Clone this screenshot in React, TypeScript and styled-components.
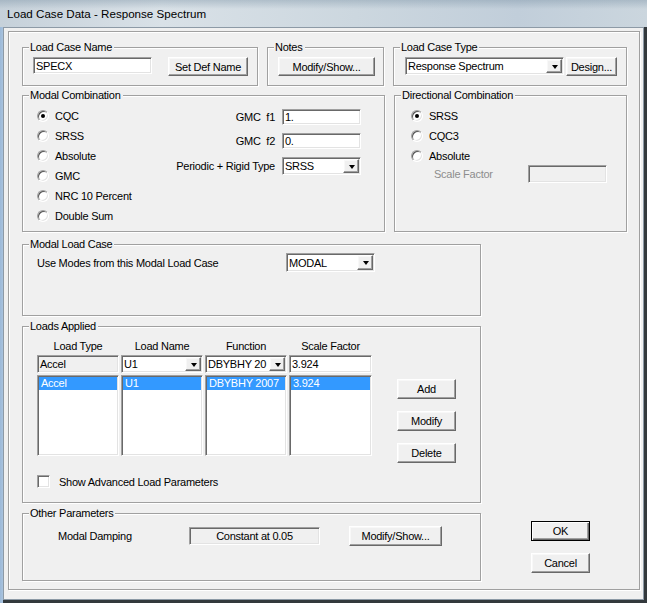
import styled, { createGlobalStyle, css } from 'styled-components';

const GlobalStyle = createGlobalStyle`
  html, body {
    margin: 0;
    padding: 0;
    background: #2e3538;
  }
  body {
    font-family: "Liberation Sans", Arial, sans-serif;
    font-size: 11px;
    letter-spacing: -0.25px;
    color: #000;
  }
  * {
    box-sizing: border-box;
  }
`;

const Window = styled.div`
  width: 647px;
  height: 603px;
  display: flex;
  flex-direction: column;
  overflow: hidden;
  background: linear-gradient(90deg, #9cb9d8 0, #a9c3de 3px, #33393c 3px);
`;

const TitleBar = styled.div`
  height: 27px;
  flex: none;
  display: flex;
  align-items: center;
  padding: 0 0 1px 7px;
  font-family: "Segoe UI", "Liberation Sans", Arial, sans-serif;
  font-size: 11.6px;
  letter-spacing: 0;
  color: #000;
  background:
    linear-gradient(180deg, rgba(110, 135, 155, 0.35) 0, rgba(255, 255, 255, 0) 9px),
    linear-gradient(90deg, #c6d1da 0, #d9e1e7 25%, #ccd7df 55%, #c1ceda 80%, #cbd6de 100%);
`;

const Client = styled.div`
  width: 641px;
  height: 573px;
  margin-left: 3px;
  border: 1px solid #8d9aa6;
  background: #f0f0f0;
  padding: 3px 0 0 3px;
`;

const Panel = styled.div`
  width: 632px;
  height: 559px;
  margin-left: 1px;
  border: 1px solid #a0a0a0;
  box-shadow: inset 1px 1px 0 #fff, 1px 1px 0 #fff;
  padding: 15px 0 0 13px;
  display: flex;
  flex-direction: column;
`;

const Row = styled.div<{ $mt?: number; $gap?: number }>`
  display: flex;
  align-items: flex-start;
  gap: ${p => p.$gap ?? 0}px;
  margin-top: ${p => p.$mt ?? 0}px;
`;

const BottomRow = styled.div`
  display: flex;
  align-items: flex-end;
  margin-top: 12px;
`;

const LeftCol = styled.div`
  width: 459px;
  display: flex;
  flex-direction: column;
  gap: 10px;
`;

const Group = styled.div<{ $w: number; $h: number }>`
  width: ${p => p.$w}px;
  height: ${p => p.$h}px;
  flex: none;
  border: 1px solid #a0a0a0;
  box-shadow: inset 1px 1px 0 #fff, 1px 1px 0 #fff;
  display: flex;
  flex-direction: column;
`;

const Caption = styled.div`
  align-self: flex-start;
  height: 13px;
  line-height: 13px;
  margin: -7px 0 0 6px;
  padding: 0 2px 0 1px;
  background: #f0f0f0;
  white-space: nowrap;
`;

const Body = styled.div<{ $pad: string; $dir?: 'row' | 'column'; $gap?: number; $align?: string }>`
  display: flex;
  flex-direction: ${p => p.$dir ?? 'row'};
  align-items: ${p => p.$align ?? 'flex-start'};
  gap: ${p => p.$gap ?? 0}px;
  padding: ${p => p.$pad};
`;

const raised = css`
  border: 1px solid;
  border-color: #fff #696969 #696969 #fff;
  box-shadow: inset -1px -1px 0 #a0a0a0, inset 1px 1px 0 #f8f8f8;
  background: #f0f0f0;
`;

const sunken = css`
  border: 1px solid;
  border-color: #a0a0a0 #fff #fff #a0a0a0;
  box-shadow: inset 1px 1px 0 #696969, inset -1px -1px 0 #e3e3e3;
`;

const Button = styled.button<{ $w: number; $h?: number; $default?: boolean; $ml?: number }>`
  width: ${p => p.$w}px;
  height: ${p => p.$h ?? 20}px;
  margin-left: ${p => p.$ml ?? 0}px;
  flex: none;
  padding: 0;
  font: inherit;
  letter-spacing: inherit;
  color: #000;
  ${raised};
  ${p =>
    p.$default &&
    css`
      border-color: #000;
      box-shadow: inset 1px 1px 0 #fff, inset -1px -1px 0 #696969, inset -2px -2px 0 #a0a0a0;
    `}
`;

const Field = styled.div<{ $w: number; $h?: number; $grey?: boolean; $center?: boolean }>`
  width: ${p => p.$w}px;
  height: ${p => p.$h ?? 18}px;
  flex: none;
  display: flex;
  align-items: center;
  justify-content: ${p => (p.$center ? 'center' : 'flex-start')};
  padding: 0 2px;
  overflow: hidden;
  white-space: nowrap;
  background: ${p => (p.$grey ? '#f0f0f0' : '#fff')};
  ${sunken};
`;

const Combo = styled.div<{ $w: number; $h?: number }>`
  width: ${p => p.$w}px;
  height: ${p => p.$h ?? 18}px;
  flex: none;
  display: flex;
  align-items: stretch;
  padding: 1px;
  background: #fff;
  ${sunken};
`;

const ComboText = styled.span`
  flex: 1;
  min-width: 0;
  display: flex;
  align-items: center;
  padding-left: 1px;
  overflow: hidden;
  white-space: nowrap;
`;

const DropButton = styled.span`
  width: 16px;
  flex: none;
  display: flex;
  align-items: center;
  justify-content: center;
  ${raised};
  &::after {
    content: '';
    width: 0;
    height: 0;
    margin: 1px 0 0 1px;
    border-left: 3.5px solid transparent;
    border-right: 3.5px solid transparent;
    border-top: 4px solid #000;
  }
`;

const RadioList = styled.div<{ $pad: string }>`
  display: flex;
  flex-direction: column;
  padding: ${p => p.$pad};
`;

const RadioRow = styled.div`
  height: 20px;
  display: flex;
  align-items: center;
  gap: 6px;
  white-space: nowrap;
`;

const RadioDot = styled.span<{ $on?: boolean }>`
  width: 12px;
  height: 12px;
  flex: none;
  border-radius: 50%;
  border: 1px solid;
  border-color: #a0a0a0 #fff #fff #a0a0a0;
  box-shadow: inset 1px 1px 0 #555, inset -1px -1px 0 #e3e3e3;
  background: #fff;
  display: flex;
  align-items: center;
  justify-content: center;
  &::after {
    content: '';
    width: 4px;
    height: 4px;
    border-radius: 50%;
    background: #000;
    display: ${p => (p.$on ? 'block' : 'none')};
  }
`;

const FormGrid = styled.div`
  margin: 7px 23px 0 auto;
  display: grid;
  grid-template-columns: auto 79px;
  grid-template-rows: 16px 16px 18px;
  column-gap: 7px;
  row-gap: 8px;
  align-items: center;
`;

const FormLabel = styled.span`
  text-align: right;
  white-space: pre;
`;

const ScaleRow = styled.div`
  display: flex;
  align-items: center;
  margin: -1px 0 0 16px;
`;

const GreyLabel = styled.span<{ $w: number }>`
  width: ${p => p.$w}px;
  padding-left: 23px;
  color: #8d8d8d;
`;

const Label = styled.span<{ $w: number }>`
  width: ${p => p.$w}px;
  flex: none;
  white-space: nowrap;
`;

const Table = styled.div`
  display: grid;
  grid-template-columns: 82px 82px 82px 83px;
  grid-template-rows: 13px 18px 81px;
  column-gap: 2px;
  row-gap: 2px;
`;

const HeadCell = styled.div`
  text-align: center;
  line-height: 13px;
  white-space: nowrap;
`;

const ListBox = styled.div`
  background: #fff;
  padding: 1px;
  ${sunken};
`;

const ListItem = styled.div<{ $selected?: boolean }>`
  height: 13px;
  line-height: 13px;
  padding-left: 2px;
  white-space: nowrap;
  overflow: hidden;
  background: ${p => (p.$selected ? '#3399ff' : 'transparent')};
  color: ${p => (p.$selected ? '#fff' : '#000')};
`;

const SideButtons = styled.div`
  display: flex;
  flex-direction: column;
  gap: 12px;
  margin: 39px 0 0 25px;
`;

const CheckRow = styled.div`
  display: flex;
  align-items: center;
  gap: 9px;
  margin-top: 12px;
`;

const CheckBox = styled.span`
  width: 13px;
  height: 13px;
  flex: none;
  background: #fff;
  ${sunken};
`;

const DialogButtons = styled.div`
  display: flex;
  flex-direction: column;
  gap: 12px;
  margin-left: 50px;
  padding-bottom: 8px;
`;

const modalOptions = ['CQC', 'SRSS', 'Absolute', 'GMC', 'NRC 10 Percent', 'Double Sum'];
const directionalOptions = ['SRSS', 'CQC3', 'Absolute'];

export default function App() {
  return (
    <>
      <GlobalStyle />
      <Window>
        <TitleBar>Load Case Data - Response Spectrum</TitleBar>
        <Client>
          <Panel>
            <Row $gap={9}>
              <Group $w={236} $h={39}>
                <Caption>Load Case Name</Caption>
                <Body $pad="3px 0 0 10px" $gap={16}>
                  <Field $w={119} $h={17}>SPECX</Field>
                  <Button $w={80} $h={19}>Set Def Name</Button>
                </Body>
              </Group>
              <Group $w={117} $h={39}>
                <Caption>Notes</Caption>
                <Body $pad="3px 0 0 10px">
                  <Button $w={97} $h={19}>Modify/Show...</Button>
                </Body>
              </Group>
              <Group $w={234} $h={39}>
                <Caption>Load Case Type</Caption>
                <Body $pad="3px 0 0 11px" $gap={2}>
                  <Combo $w={159} $h={18}>
                    <ComboText>Response Spectrum</ComboText>
                    <DropButton />
                  </Combo>
                  <Button $w={51} $h={19}>Design...</Button>
                </Body>
              </Group>
            </Row>

            <Row $mt={9} $gap={9}>
              <Group $w={363} $h={137}>
                <Caption>Modal Combination</Caption>
                <Body $pad="0">
                  <RadioList $pad="4px 0 0 14px">
                    {modalOptions.map((o, i) => (
                      <RadioRow key={o}>
                        <RadioDot $on={i === 0} />
                        {o}
                      </RadioRow>
                    ))}
                  </RadioList>
                  <FormGrid>
                    <FormLabel>{'GMC  f1'}</FormLabel>
                    <Field $w={79} $h={16}>1.</Field>
                    <FormLabel>{'GMC  f2'}</FormLabel>
                    <Field $w={79} $h={16}>0.</Field>
                    <FormLabel>Periodic + Rigid Type</FormLabel>
                    <Combo $w={79} $h={18}>
                      <ComboText>SRSS</ComboText>
                      <DropButton />
                    </Combo>
                  </FormGrid>
                </Body>
              </Group>
              <Group $w={233} $h={137}>
                <Caption>Directional Combination</Caption>
                <RadioList $pad="4px 0 0 16px">
                  {directionalOptions.map((o, i) => (
                    <RadioRow key={o}>
                      <RadioDot $on={i === 0} />
                      {o}
                    </RadioRow>
                  ))}
                </RadioList>
                <ScaleRow>
                  <GreyLabel $w={117}>Scale Factor</GreyLabel>
                  <Field $w={79} $h={18} $grey />
                </ScaleRow>
              </Group>
            </Row>

            <BottomRow>
              <LeftCol>
                <Group $w={459} $h={72}>
                  <Caption>Modal Load Case</Caption>
                  <Body $pad="2px 0 0 14px" $align="center">
                    <Label $w={249}>Use Modes from this Modal Load Case</Label>
                    <Combo $w={89} $h={19}>
                      <ComboText>MODAL</ComboText>
                      <DropButton />
                    </Combo>
                  </Body>
                </Group>

                <Group $w={459} $h={177}>
                  <Caption>Loads Applied</Caption>
                  <Body $pad="7px 0 0 14px" $dir="column">
                    <Row>
                      <Table>
                        <HeadCell>Load Type</HeadCell>
                        <HeadCell>Load Name</HeadCell>
                        <HeadCell>Function</HeadCell>
                        <HeadCell>Scale Factor</HeadCell>
                        <Field $w={82} $grey>Accel</Field>
                        <Combo $w={82}>
                          <ComboText>U1</ComboText>
                          <DropButton />
                        </Combo>
                        <Combo $w={82}>
                          <ComboText>DBYBHY 20</ComboText>
                          <DropButton />
                        </Combo>
                        <Field $w={83}>3.924</Field>
                        <ListBox>
                          <ListItem $selected>Accel</ListItem>
                        </ListBox>
                        <ListBox>
                          <ListItem $selected>U1</ListItem>
                        </ListBox>
                        <ListBox>
                          <ListItem $selected>DBYBHY 2007</ListItem>
                        </ListBox>
                        <ListBox>
                          <ListItem $selected>3.924</ListItem>
                        </ListBox>
                      </Table>
                      <SideButtons>
                        <Button $w={59}>Add</Button>
                        <Button $w={59}>Modify</Button>
                        <Button $w={59}>Delete</Button>
                      </SideButtons>
                    </Row>
                    <CheckRow>
                      <CheckBox />
                      Show Advanced Load Parameters
                    </CheckRow>
                  </Body>
                </Group>

                <Group $w={459} $h={68}>
                  <Caption>Other Parameters</Caption>
                  <Body $pad="6px 0 0 35px" $align="center">
                    <Label $w={131}>Modal Damping</Label>
                    <Field $w={131} $h={18} $grey $center>Constant at 0.05</Field>
                    <Button $w={93} $ml={29}>Modify/Show...</Button>
                  </Body>
                </Group>
              </LeftCol>

              <DialogButtons>
                <Button $w={59} $default>OK</Button>
                <Button $w={59}>Cancel</Button>
              </DialogButtons>
            </BottomRow>
          </Panel>
        </Client>
      </Window>
    </>
  );
}
